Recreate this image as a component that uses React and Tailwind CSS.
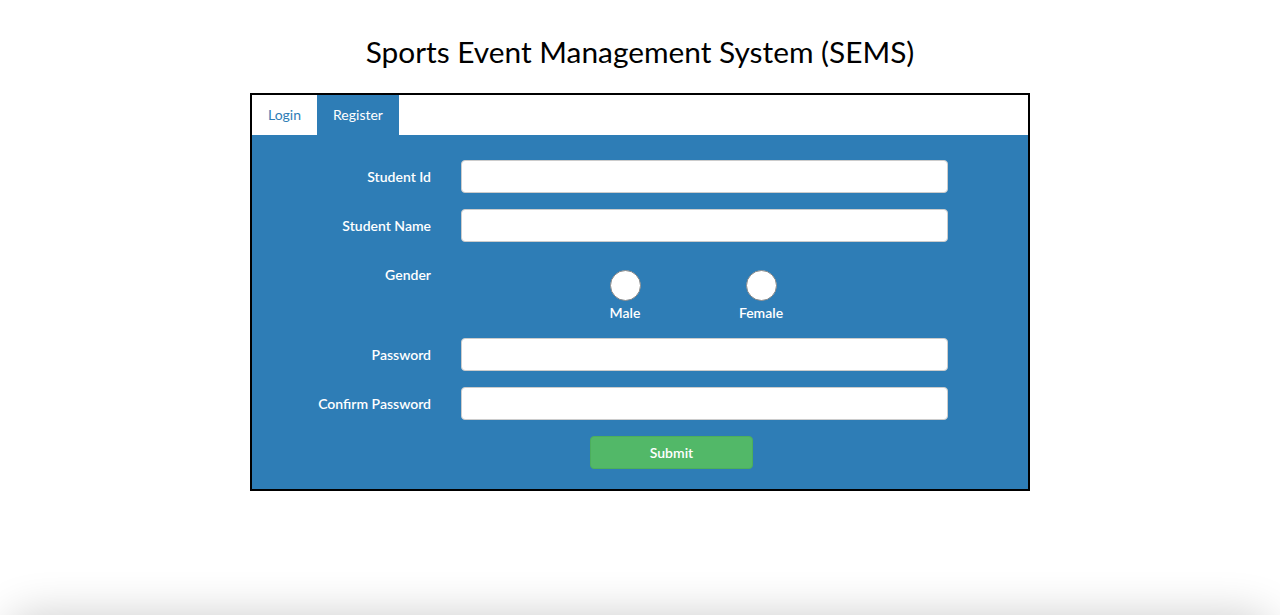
import React, { useState } from 'react'

const fields = [
  { id: 'studentId', label: 'Student Id', type: 'text' },
  { id: 'studentName', label: 'Student Name', type: 'text' },
]

const secretFields = [
  { id: 'password', label: 'Password', type: 'password' },
  { id: 'confirm', label: 'Confirm Password', type: 'password' },
]

function Row({ label, type }) {
  return (
    <div className="flex items-center h-[33px]">
      <label className="w-[179px] text-right text-[14px] font-semibold text-white">{label}</label>
      <input
        type={type}
        className="ml-[30px] w-[487px] h-[33px] rounded-[4px] bg-white border border-[#cccccc] px-3 text-[14px] outline-none"
      />
    </div>
  )
}

export default function App() {
  const [tab, setTab] = useState('register')
  const [gender, setGender] = useState(null)

  return (
    <div className="relative min-h-[615px] bg-white overflow-hidden" style={{ fontFamily: 'Lato, "Open Sans", sans-serif' }}>
      <h1 className="pt-[33px] text-center text-[29.85px] leading-[38px] text-black">
        Sports Event Management System (SEMS)
      </h1>

      <div className="mx-auto mt-[22px] w-[780px] border-2 border-black">
        {/* Tabs */}
        <div className="flex h-[40px] bg-white">
          <button
            onClick={() => setTab('login')}
            className={`w-[65px] pb-px text-[14px] ${tab === 'login' ? 'bg-[#2e7db6] text-white' : 'text-[#2e7db6]'}`}
          >
            Login
          </button>
          <button
            onClick={() => setTab('register')}
            className={`w-[82px] pb-px text-[14px] ${tab === 'register' ? 'bg-[#2e7db6] text-white' : 'text-[#2e7db6]'}`}
          >
            Register
          </button>
        </div>

        {/* Register form */}
        <div className="bg-[#2e7db6] pt-[25px] pb-[20px] flex flex-col gap-[16px]">
          {fields.map((f) => (
            <Row key={f.id} label={f.label} type={f.type} />
          ))}

          <div className="flex items-start">
            <label className="w-[179px] pt-[7px] text-right text-[14px] leading-[20px] font-semibold text-white">Gender</label>
            <div className="ml-[164px] flex gap-[76px] pt-[12px]">
              {['Male', 'Female'].map((g) => (
                <button key={g} onClick={() => setGender(g)} className="w-[60px] flex flex-col items-center">
                  <span className="w-[31px] h-[31px] rounded-full bg-white border border-[#8a8a8a] flex items-center justify-center">
                    {gender === g && <span className="w-[13px] h-[13px] rounded-full bg-[#2e7db6]" />}
                  </span>
                  <span className="mt-[2px] text-[14px] leading-[20px] font-semibold text-white">{g}</span>
                </button>
              ))}
            </div>
          </div>

          <div className="flex flex-col gap-[16px] -mt-px">
            {secretFields.map((f) => (
              <Row key={f.id} label={f.label} type={f.type} />
            ))}
          </div>

          <div className="flex">
            <button className="ml-[338px] w-[163px] h-[33px] rounded-[4px] bg-[#52b868] border border-[#4cae5c] text-[14px] font-semibold text-white">
              Submit
            </button>
          </div>
        </div>
      </div>

      {/* shadow of the panel below the fold */}
      <div className="absolute left-[8px] right-[8px] top-[615px] h-[60px] rounded-[24px] bg-white shadow-[0_0_45px_rgba(0,0,0,0.2)]" />
    </div>
  )
}
